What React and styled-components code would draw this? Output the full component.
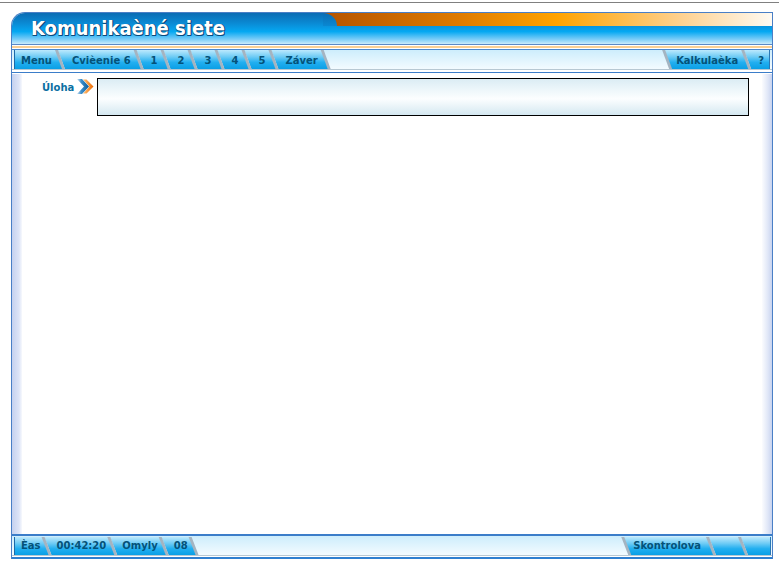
import React from "react"
import styled, { createGlobalStyle } from "styled-components"

const SLANT = 7

const GlobalStyle = createGlobalStyle`
  body {
    margin: 0;
    background: #fff;
    font-family: "DejaVu Sans", Verdana, sans-serif;
  }
`

const shape = (flatLeft, flatRight, l = 0, r = 0) => {
  const tl = `${l}px 0`
  const bl = flatLeft ? `${l}px 100%` : `${SLANT + l}px 100%`
  const tr = flatRight ? `calc(100% - ${r}px) 0` : `calc(100% - ${SLANT + r}px) 0`
  const br = `calc(100% - ${r}px) 100%`
  return `polygon(${tl}, ${tr}, ${br}, ${bl})`
}

const TopRule = styled.div`
  height: 1px;
  margin-top: 2px;
  background: #808080;
`

const Frame = styled.div`
  width: 760px;
  margin: 9px 0 0 11px;
  border: 1px solid #4a7fc6;
  border-bottom: 0;
  border-top-left-radius: 14px;
  overflow: hidden;
`

const Header = styled.header`
  position: relative;
  height: 31px;
  background: linear-gradient(180deg, #0b6cb3 0%, #0a8cd6 35%, #05a8f2 60%, #7ccdf8 85%, #c9ebfd 100%);
`

const OrangeBand = styled.div`
  position: absolute;
  top: 0;
  left: 311px;
  right: 0;
  height: 13px;
  background: linear-gradient(90deg, #b45300 0%, #de7a00 30%, #ffa300 52%, #ffd291 80%, #fffaf2 100%);

  &::before {
    content: "";
    position: absolute;
    left: 0;
    top: 0;
    width: 14px;
    height: 13px;
    background: linear-gradient(180deg, #0b6cb3, #0a88d2);
    border-top-right-radius: 14px 13px;
  }
`

const Title = styled.h1`
  position: relative;
  margin: 0;
  padding: 4px 0 0 19px;
  font-family: "DejaVu Sans Condensed", "DejaVu Sans", sans-serif;
  font-stretch: condensed;
  font-size: 20px;
  line-height: 23px;
  font-weight: bold;
  color: #fff;
  text-shadow: 1px 1px 0 #08497e, 0 1px 0 #08497e, 1px 0 0 #08497e;
`

const Line = styled.div`
  height: ${p => p.$h || 1}px;
  background: ${p => p.$c};
`

const Bar = styled.nav`
  display: flex;
  align-items: flex-start;
  height: 20px;
  box-sizing: border-box;
  padding: ${p => p.$top || 0}px ${p => p.$right}px 0 2px;
  border-bottom: 1px solid #b7c8d3;
  background: linear-gradient(180deg, #cdedfc, #f3fbff);
`

const TabGroup = styled.div`
  display: flex;
  margin-left: ${p => (p.$end ? "auto" : "0")};
`

const TabShell = styled.div`
  flex: none;
  display: flex;
  height: ${p => p.$h}px;
  background: #a4b4c1;
  clip-path: ${p => shape(p.$flatLeft, p.$flatRight)};

  & + & {
    margin-left: -${SLANT}px;
  }
`

const TabFace = styled.div`
  flex: 1;
  box-sizing: border-box;
  min-width: ${p => p.$w || 0}px;
  padding: ${p => p.$pt}px ${p => p.$pr}px 0 ${p => p.$pl}px;
  background: linear-gradient(180deg, #bce9fd 0%, #70ccf5 35%, #22aff0 65%, #0a9fe6 100%);
  clip-path: ${p => shape(p.$flatLeft, p.$flatRight, p.$lead ? 3 : 0, p.$flatRight ? 0 : 3)};
  box-shadow: ${p => (p.$flatLeft ? "inset 1px 0 0 #1c6aa8" : p.$flatRight ? "inset -1px 0 0 #2a78b5" : "none")};
  font-size: 10px;
  line-height: 12px;
  font-weight: bold;
  color: #045279;
  white-space: nowrap;
`

function Tab({ label, first, last, lead, h = 19, pt = 5, pl, pr, w }) {
  return (
    <TabShell $h={h} $flatLeft={first} $flatRight={last}>
      <TabFace
        $flatLeft={first}
        $flatRight={last}
        $lead={lead}
        $pt={pt}
        $pl={pl ?? (first ? 7 : 14)}
        $pr={pr ?? (last ? 6 : 13)}
        $w={w}
      >
        {label}
      </TabFace>
    </TabShell>
  )
}

const Content = styled.main`
  display: grid;
  grid-template-columns: 10px 1fr 10px;
  height: 460px;
`

const Gutter = styled.div`
  background: ${p =>
    p.$side === "left"
      ? "linear-gradient(90deg, #c5d1ef 0%, #dde4f7 70%, #f7f9fd 100%)"
      : "linear-gradient(90deg, #fbfcfe 0%, #dfe6f7 60%, #c8d3ef 100%)"};
`

const Main = styled.section`
  padding: 4px 13px 0 20px;
`

const TaskRow = styled.div`
  display: flex;
  align-items: flex-start;
`

const TaskLabel = styled.span`
  padding-top: 4px;
  font-size: 10px;
  line-height: 12px;
  font-weight: bold;
  color: #0b6fa2;
`

const ArrowIcon = styled.svg`
  flex: none;
  margin: 1px 3px 0 2px;
`

const TaskBox = styled.div`
  flex: 1;
  height: 38px;
  box-sizing: border-box;
  border: 1px solid #000;
  background: linear-gradient(180deg, #dbecf4 0%, #f0f8fb 35%, #fcfeff 55%, #e6f2f7 80%, #d4e8f1 100%);
`

function Arrow() {
  return (
    <ArrowIcon width="18" height="15" viewBox="0 0 18 15">
      <defs>
        <linearGradient id="arrowBlue" x1="0" y1="0" x2="1" y2="0">
          <stop offset="0" stopColor="#cfe3f2" />
          <stop offset="0.35" stopColor="#3d8fcc" />
          <stop offset="1" stopColor="#0b5b98" />
        </linearGradient>
        <linearGradient id="arrowOrange" x1="0" y1="0" x2="1" y2="0">
          <stop offset="0" stopColor="#ffc27a" />
          <stop offset="1" stopColor="#ee6a00" />
        </linearGradient>
      </defs>
      <path d="M7 0.5 H10.5 L17.5 7.5 L10.5 14.5 H7 L13.5 7.5 Z" fill="url(#arrowOrange)" />
      <path d="M1 0 H6 L13 7.5 L6 15 H1 L8 7.5 Z" fill="url(#arrowBlue)" />
    </ArrowIcon>
  )
}

const navLeft = ["Cvièenie 6", "1", "2", "3", "4", "5", "Záver"]

export default function App() {
  return (
    <>
      <GlobalStyle />
      <TopRule />
      <Frame>
        <Header>
          <OrangeBand />
          <Title>Komunikaèné siete</Title>
        </Header>
        <Line $c="#5b89c6" />
        <Line $c="#ffffff" />
        <Line $c="#f9cf95" $h={2} />
        <Line $c="#ffffff" />
        <Line $c="#4a88d0" />
        <Bar $right={2}>
          <TabGroup>
            <Tab label="Menu" first />
            {navLeft.map(item => (
              <Tab key={item} label={item} />
            ))}
          </TabGroup>
          <TabGroup $end>
            <Tab label="Kalkulaèka" lead />
            <Tab label="?" last />
          </TabGroup>
        </Bar>
        <Line $c="#ffffff" $h={2} />
        <Line $c="#3b7dc9" />
        <Line $c="#ffffff" />
        <Content>
          <Gutter $side="left" />
          <Main>
            <TaskRow>
              <TaskLabel>Úloha</TaskLabel>
              <Arrow />
              <TaskBox />
            </TaskRow>
          </Main>
          <Gutter $side="right" />
        </Content>
        <Line $c="#3b7dc9" $h={2} />
        <Bar $right={1} $top={1}>
          <TabGroup>
            <Tab label="Èas" first h={18} pt={3} pr={11} />
            <Tab label="00:42:20" h={18} pt={3} pl={12} pr={11} />
            <Tab label="Omyly" h={18} pt={3} pl={12} pr={11} />
            <Tab label="08" h={18} pt={3} pl={12} pr={11} />
          </TabGroup>
          <TabGroup $end>
            <Tab label="Skontrolova" lead h={18} pt={3} pl={12} pr={15} />
            <Tab label="" h={18} pt={3} pl={0} pr={0} w={39} />
            <Tab label="" last h={18} pt={3} pl={0} pr={0} w={30} />
          </TabGroup>
        </Bar>
        <Line $c="#ffffff" />
        <Line $c="#2f7fd0" $h={2} />
      </Frame>
    </>
  )
}
